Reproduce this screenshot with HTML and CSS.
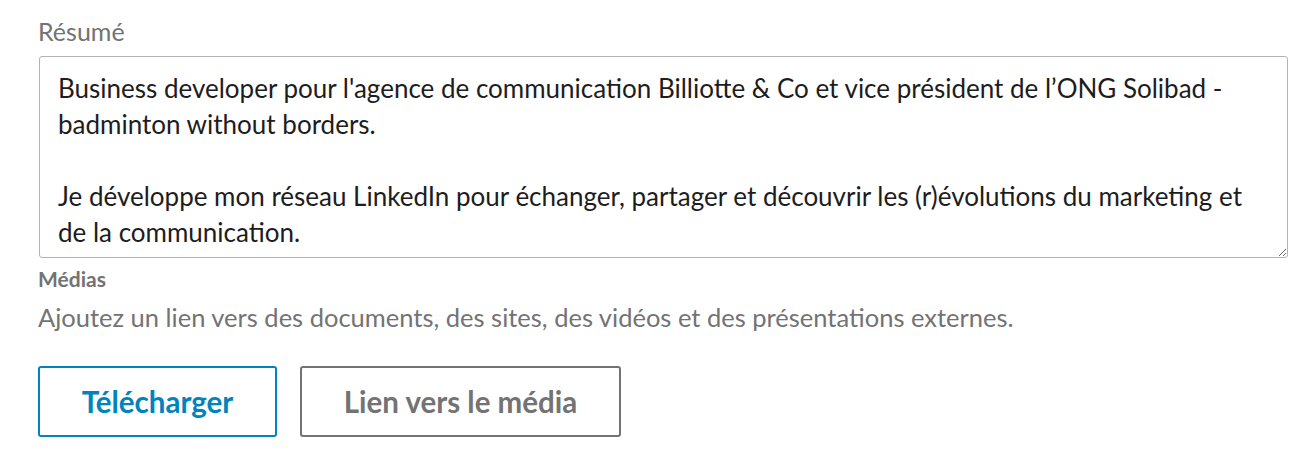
FILE: index.html
```html
<!DOCTYPE html>
<html lang="fr">
<head>
<meta charset="utf-8">
<link rel="stylesheet" href="styles.css">
</head>
<body>
<div class="form">
  <label class="field-label" for="summary">Résumé</label>
  <textarea id="summary" class="summary">Business developer pour l'agence de communication Billiotte &amp; Co et vice président de l’ONG Solibad - badminton without borders.

Je développe mon réseau LinkedIn pour échanger, partager et découvrir les (r)évolutions du marketing et de la communication.</textarea>
  <div class="media-title">Médias</div>
  <p class="media-hint">Ajoutez un lien vers des documents, des sites, des vidéos et des présentations externes.</p>
  <div class="actions">
    <button class="btn btn-primary">Télécharger</button>
    <button class="btn btn-secondary">Lien vers le média</button>
  </div>
</div>
</body>
</html>
```
FILE: styles.css
```css
html, body {
  margin: 0;
  padding: 0;
  background: #ffffff;
}
body {
  font-family: "Lato", "Open Sans", sans-serif;
}
.form {
  padding: 14px 0 0 38px;
  width: 1250px;
  display: flex;
  flex-direction: column;
  align-items: flex-start;
}
.field-label {
  font-size: 25px;
  line-height: 34px;
  color: #737373;
}
.summary {
  box-sizing: border-box;
  margin: 8px 0 0 1px;
  width: 1249px;
  height: 202px;
  padding: 13px 18px 6px 18px;
  border: 1px solid #b3b3b3;
  border-radius: 3px;
  font-family: "Lato", "Open Sans", sans-serif;
  font-size: 26px;
  line-height: 36px;
  color: #1d1d1d;
  background: #fff;
  resize: vertical;
  overflow: hidden;
  outline: none;
}
.media-title {
  margin-top: 8px;
  font-size: 21px;
  line-height: 26px;
  font-weight: 700;
  color: #737373;
}
.media-hint {
  margin: 8px 0 0 0;
  font-size: 25.5px;
  line-height: 34px;
  color: #737373;
}
.actions {
  display: flex;
  gap: 23px;
  margin-top: 32px;
}
.btn {
  box-sizing: border-box;
  height: 71px;
  border-radius: 3px;
  background: #fff;
  font-family: "Lato", "Open Sans", sans-serif;
  font-size: 29.5px;
  font-weight: 700;
  cursor: pointer;
}
.btn-primary {
  width: 239px;
  border: 2px solid #0084bf;
  color: #0084bf;
}
.btn-secondary {
  width: 321px;
  border: 2px solid #737373;
  color: #737373;
}
```
